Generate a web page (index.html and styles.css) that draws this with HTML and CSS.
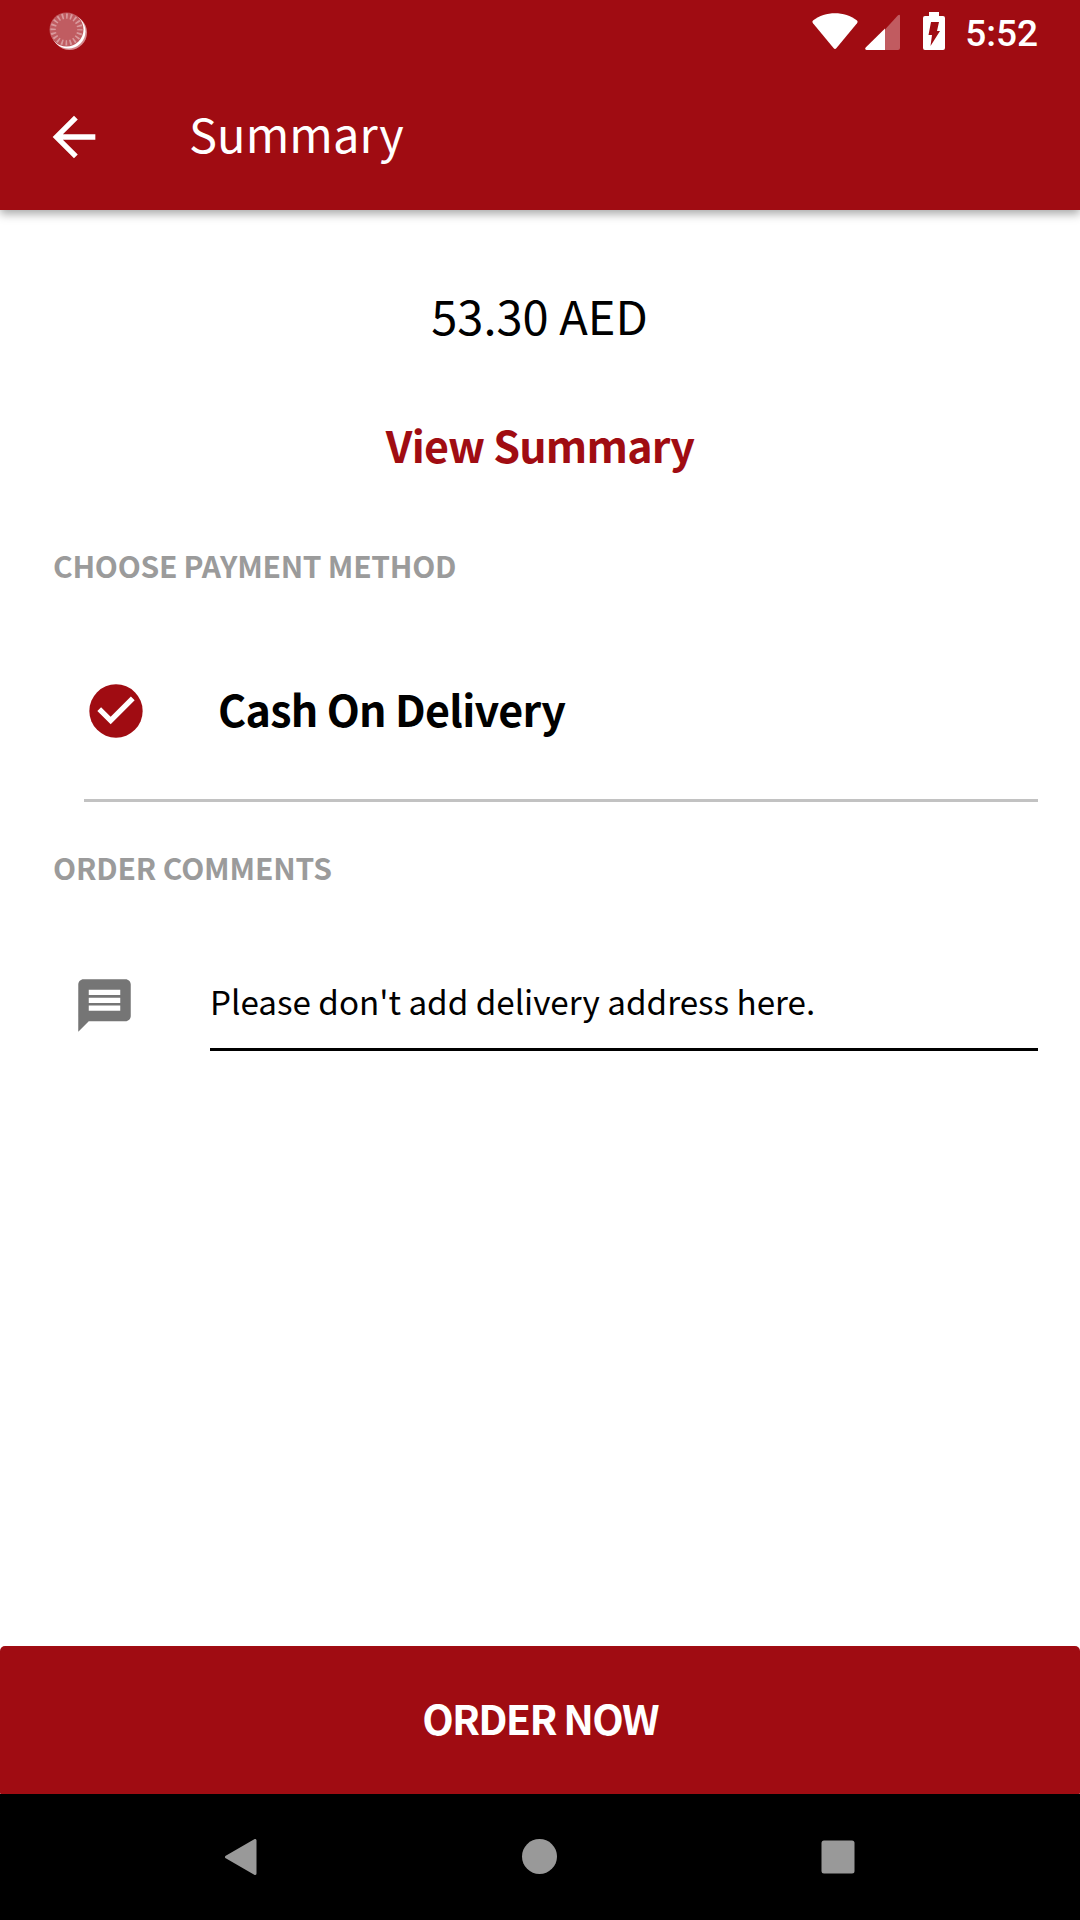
FILE: index.html
```html
<!DOCTYPE html>
<html lang="en">
<head>
<meta charset="utf-8">
<title>Summary</title>
<link rel="stylesheet" href="styles.css">
</head>
<body>
<div class="screen">
  <header class="header">
    <div class="status">
      <svg class="sync" width="40" height="40" viewBox="0 0 40 40">
        <circle cx="21.500" cy="20.500" r="17.500" fill="#d58a8d"/>
        <circle cx="20.300" cy="19.300" r="17.200" fill="#fff"/>
        <circle cx="18.500" cy="17.500" r="17" fill="#c05c61"/>
        <circle cx="18.500" cy="17.500" r="13.400" fill="none" stroke="#d99a9d" stroke-width="5.400" stroke-dasharray="1.700 2.510" stroke-dashoffset=".85"/>
      </svg>
      <div class="status-right">
        <svg class="wifi" width="46" height="37" viewBox="0 0 46 37"><path d="M1.300 7.200C13-2.200 33-2.200 44.700 7.200Q46.300 8.500 45 10.200L24.500 35Q23 36.800 21.500 35L1 10.200Q-.3 8.500 1.300 7.200Z" fill="#fff"/></svg>
        <svg class="signal" width="35" height="36" viewBox="0 0 35 36"><path d="M20 15.500 33 1.200Q35 0 35 2V34Q35 36 33 36H20Z" fill="#c15b60"/><path d="M20 14.500V36H1.500Q-.7 35.500.7 33.500Z" fill="#fff"/></svg>
        <svg class="battery" width="22" height="38" viewBox="0 0 22 38"><path d="M6 0h10v4h4q2 0 2 2v30q0 2-2 2H2q-2 0-2-2V6q0-2 2-2h4Z" fill="#fff"/><path d="M8 10h8l-2 9h3L7.500 34 9 23H5.500Z" fill="#a00c12"/></svg>
        <span class="time">5:52</span>
      </div>
    </div>
    <div class="appbar">
      <svg class="back" width="64" height="64" viewBox="0 0 24 24"><path d="M20 11H7.830l5.590-5.590L12 4l-8 8 8 8 1.410-1.410L7.830 13H20v-2z" fill="#fff"/></svg>
      <h1 class="title">Summary</h1>
    </div>
  </header>
  <main class="content">
    <div class="price">53.30 AED</div>
    <a class="view">View Summary</a>
    <h2 class="section pay">CHOOSE PAYMENT METHOD</h2>
    <div class="method">
      <svg width="64" height="64" viewBox="0 0 24 24"><circle cx="12" cy="12" r="10" fill="#a00c12"/><path d="M10 17l-5-5 1.410-1.410L10 14.170l7.590-7.590L19 8z" fill="#fff"/></svg>
      <span class="method-name">Cash On Delivery</span>
    </div>
    <h2 class="section comments">ORDER COMMENTS</h2>
    <div class="comment">
      <svg width="63" height="63" viewBox="0 0 24 24"><path d="M20 2H4c-1.100 0-1.990.9-1.990 2L2 22l4-4h14c1.100 0 2-.9 2-2V4c0-1.100-.9-2-2-2zm-2 12H6v-2h12v2zm0-3H6V9h12v2zm0-3H6V6h12v2z" fill="#757575"/></svg>
      <div class="field">Please don't add delivery address here.</div>
    </div>
  </main>
  <div class="order-wrap"><div class="order">ORDER NOW</div></div>
  <nav class="nav">
    <svg width="32" height="36" viewBox="0 0 32 36"><path d="M30 1.500V34.500L1.500 18Z" fill="#999" stroke="#999" stroke-width="3" stroke-linejoin="round"/></svg>
    <svg width="36" height="36" viewBox="0 0 36 36"><circle cx="18.500" cy="17.500" r="17.500" fill="#999"/></svg>
    <svg width="34" height="34" viewBox="0 0 34 34"><rect x=".5" y=".5" width="33" height="33" rx="2.500" fill="#999"/></svg>
  </nav>
</div>
</body>
</html>
```
FILE: styles.css
```css
* { box-sizing: border-box; }
body {
  margin: 0;
  background: #fff;
  color: #000;
  font-family: "Noto Sans CJK SC", "Open Sans", sans-serif;
}
svg { display: block; flex: none; }
h1, h2 { margin: 0; font-weight: 400; }
.screen {
  width: 1080px;
  height: 1920px;
  display: flex;
  flex-direction: column;
  overflow: hidden;
}
.header {
  height: 210px;
  background: #a00c12;
  color: #fff;
  box-shadow: 0 4px 9px rgba(0, 0, 0, .34);
}
.status {
  height: 63px;
  padding: 12px 42px 0 48px;
  display: flex;
  justify-content: space-between;
  align-items: flex-start;
}
.status-right { display: flex; align-items: flex-start; }
.wifi { margin: 1px 7px 0 0; }
.signal { margin: 2px 23px 0 0; }
.battery { margin-right: 20px; }
.time {
  font: 500 37px/43px Roboto, sans-serif;
  white-space: nowrap;
}
.appbar {
  height: 147px;
  padding-left: 42px;
  display: flex;
  align-items: center;
}
.title {
  margin: -8px 0 0 83px;
  font-size: 47px;
  line-height: 72px;
  letter-spacing: .1px;
}
.content { flex: 1; padding: 71px 42px 0 0; }
.price {
  padding-left: 41px;
  text-align: center;
  font-size: 47px;
  line-height: 67px;
}
.view {
  display: block;
  margin-top: 66px;
  padding-left: 42px;
  text-align: center;
  color: #a00c12;
  font-weight: 700;
  font-size: 43px;
  line-height: 60px;
  letter-spacing: -.8px;
}
.section {
  padding-left: 53px;
  color: #9b9b9b;
  font-weight: 700;
  font-size: 30px;
  line-height: 40px;
  white-space: nowrap;
}
.pay { margin-top: 71px; letter-spacing: -.28px; }
.method {
  height: 217px;
  margin-left: 83px;
  padding-top: 38px;
  border-bottom: 3px solid #c2c2c2;
  margin-left: 84px;
  display: flex;
  align-items: center;
}
.method-name {
  margin: -6px 0 0 70px;
  font-weight: 700;
  font-size: 43px;
  line-height: 60px;
  letter-spacing: -.7px;
}
.comments { margin-top: 45px; letter-spacing: -.15px; }
.comment {
  margin: 87px 0 0 73px;
  display: flex;
  align-items: flex-start;
}
.field {
  flex: 1;
  height: 77px;
  margin-left: 74px;
  border-bottom: 3px solid #000;
  font-size: 33.2px;
  line-height: 54px;
  white-space: nowrap;
}
.order-wrap { height: 148px; }
.order {
  height: 148px;
  border-radius: 5px 5px 1px 1px;
  background: #a00c12;
  color: #fff;
  text-align: center;
  font-weight: 700;
  font-size: 41px;
  line-height: 142px;
  letter-spacing: -1.7px;
}
.nav {
  height: 126px;
  padding: 0 225px;
  background: #000;
  display: flex;
  align-items: center;
  justify-content: space-between;
}
```
